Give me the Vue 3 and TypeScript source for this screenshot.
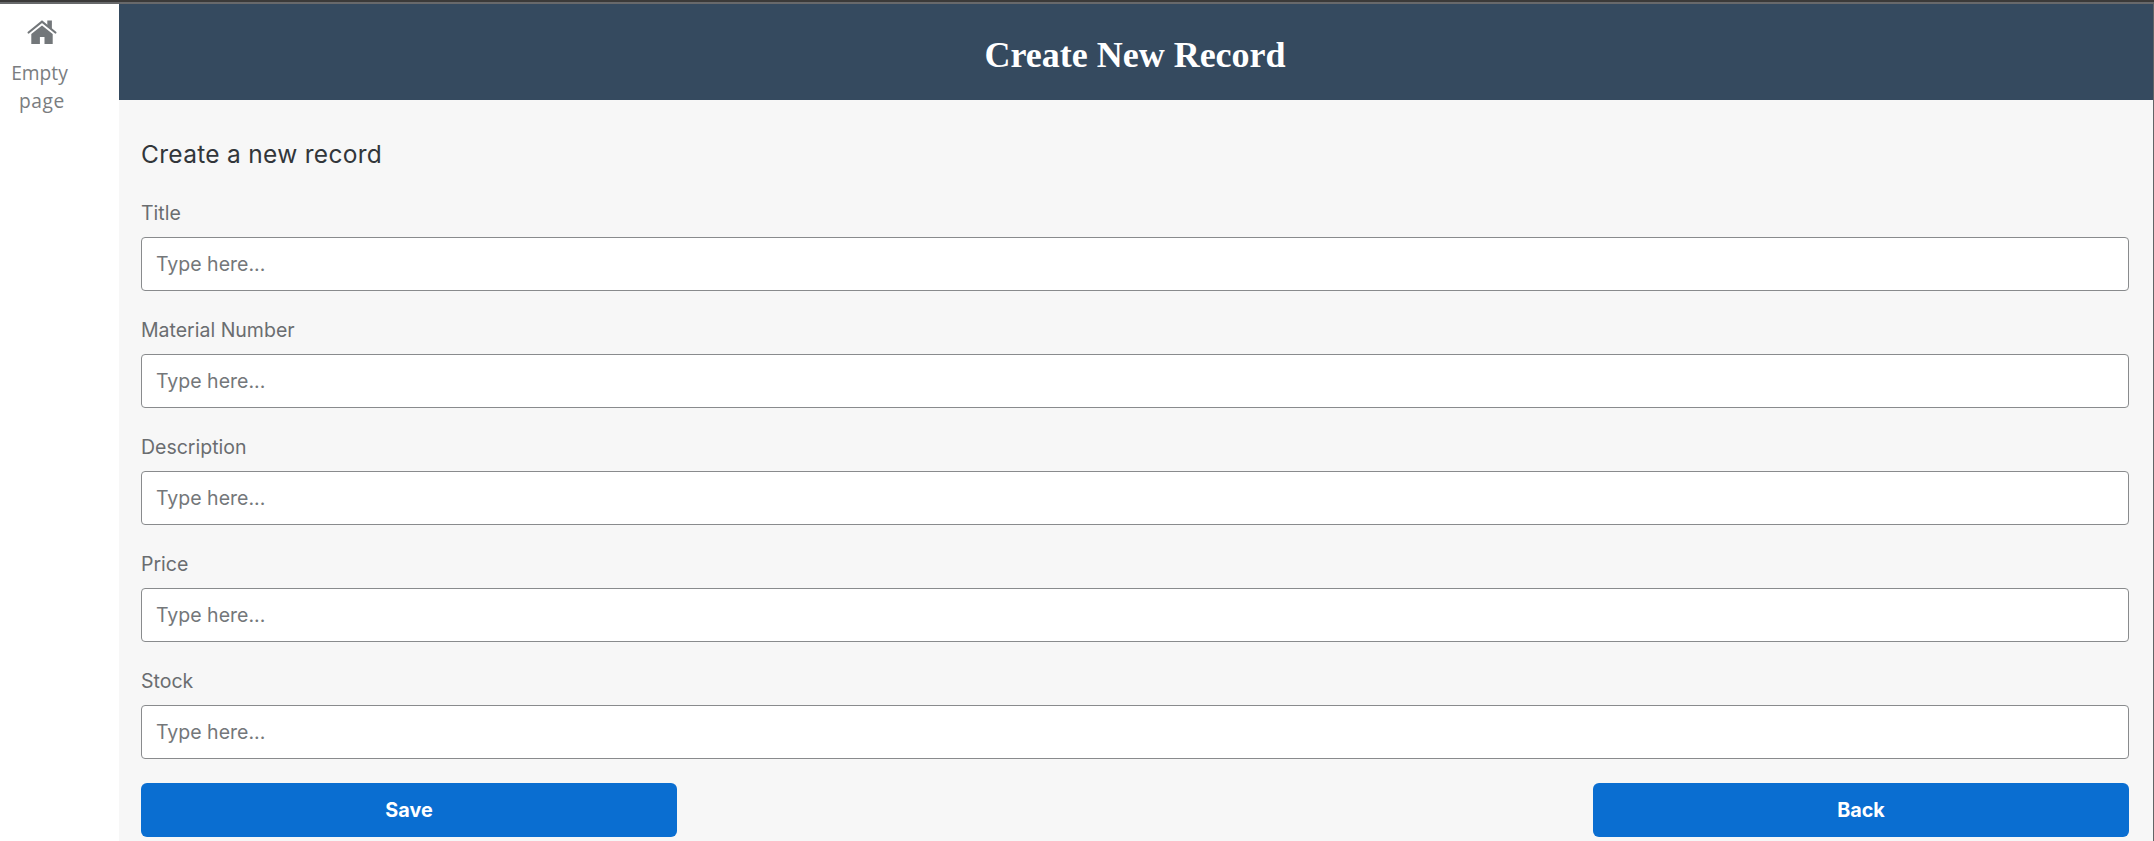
<script setup lang="ts">
import { reactive } from 'vue'

interface Field {
  id: string
  label: string
}

const fields: Field[] = [
  { id: 'title', label: 'Title' },
  { id: 'material', label: 'Material Number' },
  { id: 'description', label: 'Description' },
  { id: 'price', label: 'Price' },
  { id: 'stock', label: 'Stock' },
]

const record = reactive<Record<string, string>>({
  title: '',
  material: '',
  description: '',
  price: '',
  stock: '',
})
</script>

<template>
  <div class="window">
    <div class="layout">
      <nav class="sidebar">
        <a class="nav-item">
          <svg class="home" viewBox="0 0 30 24" width="30" height="24" aria-hidden="true">
            <path d="M20.3 5.2V.6h4.6v8.6z" />
            <path d="M1.6 12.5 15 1.7l13.4 10.8" class="roof" />
            <path d="M4.3 14.1 15 5.6l10.7 8.5V24h-8.2v-7h-4.6v7H4.3z" />
          </svg>
          <span class="nav-label">Empty<br /><span class="second">page</span></span>
        </a>
      </nav>
      <div class="main">
        <header class="header">
          <h1>Create New Record</h1>
        </header>
        <form class="form" @submit.prevent>
          <h2>Create a new record</h2>
          <div v-for="field in fields" :key="field.id" class="field">
            <label :for="field.id">{{ field.label }}</label>
            <input :id="field.id" v-model="record[field.id]" type="text" placeholder="Type here..." />
          </div>
          <div class="actions">
            <button type="submit">Save</button>
            <button type="button">Back</button>
          </div>
        </form>
      </div>
    </div>
  </div>
</template>

<style>
body {
  overflow: hidden;
}
</style>

<style scoped>
.window,
.window * {
  box-sizing: border-box;
}

.window {
  height: 841px;
  border-top: 2px solid #3b3a39;
  overflow: hidden;
  background: #fff;
  font-family: Inter, "Liberation Sans", sans-serif;
}

.layout {
  display: flex;
  height: 839px;
  border-top: 2px solid #68696b;
  border-right: 1px solid #626466;
}

.sidebar {
  width: 119px;
  flex: none;
}

.nav-item {
  display: flex;
  flex-direction: column;
  align-items: center;
  width: 84px;
  padding-top: 16px;
}

.home {
  display: block;
  fill: #73777a;
}

.roof {
  fill: none;
  stroke: #73777a;
  stroke-width: 2.2;
  stroke-linecap: round;
  stroke-linejoin: miter;
}

.nav-label {
  margin-top: 15px;
  padding-right: 5px;
  color: #7a7d80;
  font: 19.2px/28px "Open Sans", "Noto Sans", sans-serif;
  text-align: center;
}

.second {
  padding-left: 5px;
  letter-spacing: 0.6px;
}

.main {
  flex: 1;
  background: #f7f7f7;
}

.header {
  display: flex;
  align-items: center;
  justify-content: center;
  height: 96px;
  padding: 6px 2px 0 0;
  background: #354a5f;
}

h1 {
  margin: 0;
  color: #fff;
  font: bold 36px/42px "Liberation Serif", serif;
}

.form {
  padding: 38px 24px 0 22px;
}

h2 {
  margin: 0 0 28px;
  color: #32363a;
  font-size: 24.5px;
  font-weight: 400;
  line-height: 32px;
  letter-spacing: 0.3px;
}

.field {
  height: 117px;
}

label {
  display: block;
  height: 39px;
  color: #6a6d70;
  font-size: 19.5px;
  line-height: 30px;
}

input {
  display: block;
  width: 100%;
  height: 54px;
  padding: 0 15px 0 14px;
  border: 1px solid #898b8d;
  border-radius: 4px;
  outline: 0;
  background: #fff;
  color: #32363a;
  font: 19.5px Inter, "Liberation Sans", sans-serif;
}

input::placeholder {
  color: #74777a;
  opacity: 1;
}

.actions {
  display: flex;
  justify-content: space-between;
}

button {
  width: 536px;
  height: 54px;
  padding: 0;
  border: 0;
  border-radius: 6px;
  background: #0a6ed1;
  color: #fff;
  font: bold 19.8px Inter, "Liberation Sans", sans-serif;
}
</style>
